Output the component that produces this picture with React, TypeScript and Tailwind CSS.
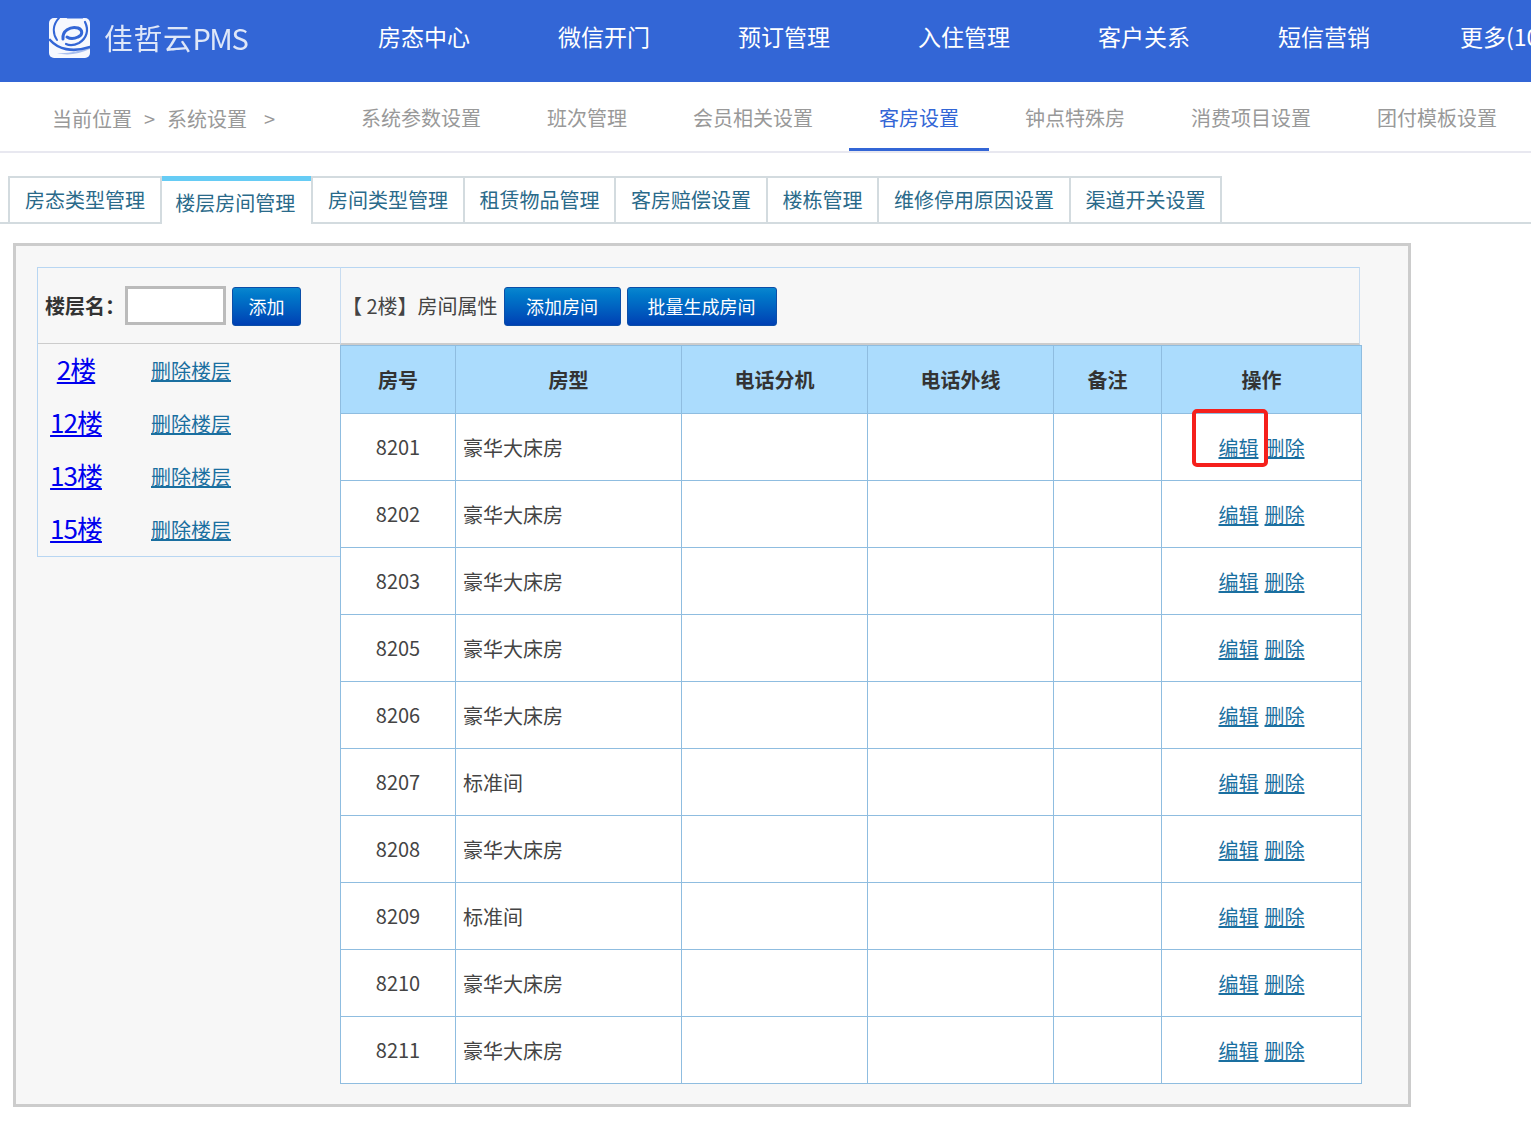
const font = { fontFamily: '"Noto Sans CJK SC", "Noto Sans", sans-serif' }

const navItems = ["房态中心", "微信开门", "预订管理", "入住管理", "客户关系", "短信营销", "更多(10)"]
const subItems = ["系统参数设置", "班次管理", "会员相关设置", "客房设置", "钟点特殊房", "消费项目设置", "团付模板设置"]
const tabs = ["房态类型管理", "楼层房间管理", "房间类型管理", "租赁物品管理", "客房赔偿设置", "楼栋管理", "维修停用原因设置", "渠道开关设置"]
const floors = ["2楼", "12楼", "13楼", "15楼"]
const rooms = [
  ["8201", "豪华大床房"],
  ["8202", "豪华大床房"],
  ["8203", "豪华大床房"],
  ["8205", "豪华大床房"],
  ["8206", "豪华大床房"],
  ["8207", "标准间"],
  ["8208", "豪华大床房"],
  ["8209", "标准间"],
  ["8210", "豪华大床房"],
  ["8211", "豪华大床房"],
]

function Logo() {
  return (
    <svg width="41" height="40" viewBox="0 0 41 40" fill="none" className="shrink-0 blur-[0.7px]">
      <rect width="41" height="40" rx="5" fill="#f6f8fe" />
      <g stroke="#3366d6" strokeLinecap="round">
        <path d="M10 0C4 6 3 15 8 22" strokeWidth="2" />
        <path d="M19 -1H33" strokeWidth="3" />
        <path d="M14 21C13 13 21 8 29 10c5 2 5 7 0 9-4 2-8 2-11 0" strokeWidth="3" />
        <path d="M36 4c4 8 2 16-6 21-4 2-9 3-13 1" strokeWidth="2.2" />
        <path d="M1 22c8 9 22 13 40 7" strokeWidth="2.6" />
      </g>
      <path d="M8 35c10 3 22 1 33-4v-2C30 33 19 36 8 35z" fill="#3366d6" opacity="0.4" />
    </svg>
  )
}

function Btn({ children, className }: { children: string; className: string }) {
  return (
    <button className={`mt-[1px] h-[39px] rounded-[3px] border border-[#0b4ea8] bg-gradient-to-b from-[#0a86cf] to-[#003fb3] text-[18px] text-white ${className}`}>
      {children}
    </button>
  )
}

export default function App() {
  return (
    <div style={font} className="relative h-[1146px] w-[1531px] overflow-hidden bg-white text-[#333]">
      {/* top nav */}
      <div className="flex h-[82px] items-center bg-[#3366d6] pb-[6px] pl-[49px] text-white">
        <Logo />
        <div className="ml-[14px] flex w-[274px] shrink-0 items-baseline text-[#dfe7f8] blur-[0.3px]">
          <span className="text-[29px] tracking-[0.5px]">佳哲云</span>
          <span className="text-[29px] tracking-[-1.5px]">PMS</span>
        </div>
        <div className="mb-[4px] flex gap-[88px] whitespace-nowrap text-[23px]">
          {navItems.map((item, i) => (
            <span key={item} className={i === 6 ? "ml-[2px]" : ""}>
              {item}
            </span>
          ))}
        </div>
      </div>

      {/* breadcrumb + sub nav */}
      <div className="flex h-[71px] items-stretch border-b-2 border-[#e8e8f0] text-[20px] text-[#999]">
        <div className="flex w-[331px] items-center whitespace-pre pl-[52px] pt-[4px]">
          <span>当前位置</span>
          <span className="ml-[12px]">&gt;</span>
          <span className="ml-[12px]">系统设置</span>
          <span className="ml-[17px]">&gt;</span>
        </div>
        <div className="flex gap-[6px]">
          {subItems.map((item) => (
            <div
              key={item}
              className={`flex h-[69px] items-center border-b-[3px] px-[30px] pt-[5px] ${
                item === "客房设置" ? "border-[#3366d6] text-[#3366d6]" : "border-transparent"
              }`}
            >
              {item}
            </div>
          ))}
        </div>
      </div>

      {/* tabs */}
      <div className="mt-[23px] flex h-[48px] border-b-2 border-[#d3dbdf] pl-[8px] text-[20px] text-[#2a6a8a]">
        {tabs.map((tab, i) =>
          i === 1 ? (
            <div key={tab} className="z-10 h-[48px] w-[151.5px] border-l-2 border-[#d3dbdf] bg-white">
              <div className="flex h-full items-center justify-center border-t-[5px] border-[#66ccf5] pr-[2px] pt-[1px]">
                {tab}
              </div>
            </div>
          ) : (
            <div
              key={tab}
              className={`flex h-[46px] items-center whitespace-nowrap border-t-2 border-l-2 border-[#d3dbdf] pl-[15px] pr-[14.5px] ${
                i === tabs.length - 1 ? "border-r-2" : ""
              }`}
            >
              {tab}
            </div>
          )
        )}
      </div>

      {/* main panel */}
      <div className="ml-[13px] mt-[19px] flex h-[864px] w-[1398px] border-[3px] border-[#ccc] bg-[#f7f7f7] pl-[21px] pt-[21px]">
        <div className="h-[290px] w-[303px] border-y border-l border-[#b8d6f2]">
          <div className="flex h-[76px] items-center border-b border-[#ccc] pl-[7px]">
            <span className="w-[80px] text-[20px] font-bold">楼层名：</span>
            <input className="h-[39px] w-[101px] border-[3px] border-[#bbb] bg-white" />
            <Btn className="ml-[6px] w-[69px]">添加</Btn>
          </div>
          <div>
            {floors.map((f) => (
              <div key={f} className="flex h-[53px] items-center">
                <a className="w-[76px] pb-[4px] text-center text-[26px] tracking-[-1px] text-[#0000ee] underline">{f}</a>
                <a className="ml-[37px] text-[20px] text-[#1a6fa0] underline">删除楼层</a>
              </div>
            ))}
          </div>
        </div>

        <div className="w-[1022px]">
          <div className="flex h-[78px] w-[1020px] items-center border-x border-t border-b-2 border-x-[#c8dcf0] border-t-[#b8d6f2] border-b-[#ccc] pl-[1px] text-[20px] text-[#444]">
            <span className="whitespace-pre">【 2楼】房间属性</span>
            <Btn className="ml-[6px] w-[117px]">添加房间</Btn>
            <Btn className="ml-[6px] w-[150px]">批量生成房间</Btn>
          </div>
          <table className="w-[1022px] table-fixed border-collapse bg-white text-[20px]">
            <colgroup>
              <col className="w-[115px]" />
              <col className="w-[226px]" />
              <col className="w-[186px]" />
              <col className="w-[186px]" />
              <col className="w-[108px]" />
              <col className="w-[200px]" />
            </colgroup>
            <thead>
              <tr className="h-[68px] bg-[#abdcfd]">
                {["房号", "房型", "电话分机", "电话外线", "备注", "操作"].map((h) => (
                  <th key={h} className="border border-[#8fbde0] font-bold">
                    {h}
                  </th>
                ))}
              </tr>
            </thead>
            <tbody className="text-[#444]">
              {rooms.map(([no, type]) => (
                <tr key={no} className="h-[67px]">
                  <td className="border border-[#8fbde0] text-center">{no}</td>
                  <td className="border border-[#8fbde0] pl-[7px] pt-[1px]">{type}</td>
                  <td className="border border-[#8fbde0]"></td>
                  <td className="border border-[#8fbde0]"></td>
                  <td className="border border-[#8fbde0]"></td>
                  <td className="border border-[#8fbde0] pt-[1px] text-center text-[#1a6fa0]">
                    <a className="underline">编辑</a>
                    <a className="ml-[6px] underline">删除</a>
                  </td>
                </tr>
              ))}
            </tbody>
          </table>
        </div>
      </div>

      {/* annotation on the screenshot */}
      <div className="absolute left-[1192px] top-[409px] h-[58px] w-[76px] rounded-[5px] border-4 border-[#f5201c]" />
    </div>
  )
}
